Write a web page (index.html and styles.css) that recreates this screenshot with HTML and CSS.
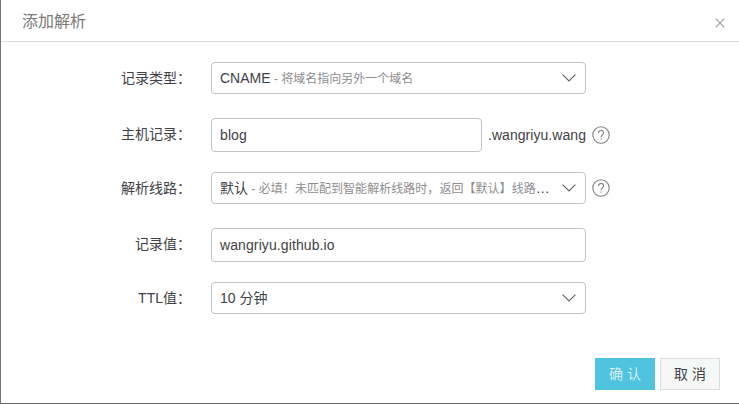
FILE: index.html
```html
<!DOCTYPE html>
<html lang="zh-CN">
<head>
<meta charset="utf-8">
<title>添加解析</title>
<link rel="stylesheet" href="styles.css">
</head>
<body>
<div class="dialog">
  <header class="header">
    <h1 class="title">添加解析</h1>
    <svg class="close" viewBox="0 0 10 10"><path d="M.7.7l8.6 8.6M9.3.7L.7 9.3"/></svg>
  </header>
  <main class="form">
    <div class="row">
      <span class="label">记录类型：</span>
      <div class="field select"><span class="value">CNAME<span class="hint"> - 将域名指向另外一个域名</span></span><svg class="arrow" viewBox="0 0 14 8"><path d="M.6.6L7 7L13.4.6"/></svg></div>
    </div>
    <div class="row">
      <span class="label">主机记录：</span>
      <div class="field input short"><span class="value">blog</span></div>
      <span class="suffix">.wangriyu.wang</span>
      <svg class="help" viewBox="0 0 18 18"><circle cx="9" cy="9" r="8.2"/><path d="M6.5 7C6.5 3.6 11.6 3.6 11.6 6.8C11.6 8.8 9.1 8.8 9.1 11.2M9.1 12.5v1.3"/></svg>
    </div>
    <div class="row">
      <span class="label">解析线路：</span>
      <div class="field select"><span class="value line">默认<span class="hint"> - 必填！未匹配到智能解析线路时，返回【默认】线路</span>…</span><svg class="arrow" viewBox="0 0 14 8"><path d="M.6.6L7 7L13.4.6"/></svg></div>
      <svg class="help" viewBox="0 0 18 18"><circle cx="9" cy="9" r="8.2"/><path d="M6.5 7C6.5 3.6 11.6 3.6 11.6 6.8C11.6 8.8 9.1 8.8 9.1 11.2M9.1 12.5v1.3"/></svg>
    </div>
    <div class="row">
      <span class="label">记录值：</span>
      <div class="field input"><span class="value">wangriyu.github.io</span></div>
    </div>
    <div class="row">
      <span class="label">TTL值：</span>
      <div class="field select"><span class="value">10 分钟</span><svg class="arrow" viewBox="0 0 14 8"><path d="M.6.6L7 7L13.4.6"/></svg></div>
    </div>
  </main>
  <footer class="footer">
    <button class="button primary">确 认</button>
    <button class="button">取 消</button>
  </footer>
</div>
</body>
</html>
```
FILE: styles.css
```css
* { box-sizing: border-box; }
body {
  margin: 0;
  background: #fff;
  color: #3f4246;
  font: 14px/20px "Liberation Sans", "Noto Sans CJK SC", sans-serif;
}
.dialog {
  height: 404px;
  display: flex;
  flex-direction: column;
  border-left: 1px solid #74777a;
  border-bottom: 1px solid #66686a;
}
.header {
  height: 42px;
  display: flex;
  align-items: center;
  justify-content: space-between;
  padding: 2px 14px 0 21px;
  border-bottom: 1px solid #dcdcdc;
}
.title {
  margin: 0;
  font-size: 16px;
  font-weight: 400;
  color: #7a7a7a;
}
.close {
  width: 10px;
  height: 10px;
  margin-top: 2px;
  fill: none;
  stroke: #a0a0a0;
  stroke-width: 1.2;
}
.form {
  display: flex;
  flex-direction: column;
  gap: 20px;
  padding: 20px 0 0;
}
.row { display: flex; align-items: center; }
.row:nth-child(even) { padding-top: 4px; }
.row:nth-child(even) .label { padding-bottom: 2px; }
.label {
  width: 190px;
  margin-right: 20px;
  text-align: right;
}
.field {
  width: 375px;
  display: flex;
  align-items: center;
  padding: 0 9px 0 8px;
  border: 1px solid #c3c3c3;
  border-radius: 4px;
}
.select { height: 32px; }
.input { height: 34px; letter-spacing: .1px; }
.short { width: 271px; }
.value {
  flex: 1;
  min-width: 0;
  margin-right: 9px;
  white-space: nowrap;
}
.line .hint { letter-spacing: .04px; }
.hint { font-size: 12px; color: #8e8e8e; }
.arrow {
  width: 14px;
  height: 8px;
  fill: none;
  stroke: #666;
  stroke-width: 1.2;
}
.suffix { width: 98px; margin-left: 6px; white-space: nowrap; letter-spacing: .05px; }
.help {
  width: 18px;
  height: 18px;
  margin-left: 6px;
  fill: none;
  stroke: #808080;
  stroke-width: 1.1;
}
.footer {
  display: flex;
  justify-content: flex-end;
  gap: 5px;
  margin-top: auto;
  padding: 0 19px 13px 0;
}
.button {
  width: 60px;
  height: 32px;
  padding: 0;
  border: 1px solid #ddd;
  background: #f6f7f7;
  color: #3f4246;
  font: inherit;
}
.primary {
  border-color: #50c3df;
  background: #50c3df;
  color: #fff;
  font-weight: 300;
}
```
